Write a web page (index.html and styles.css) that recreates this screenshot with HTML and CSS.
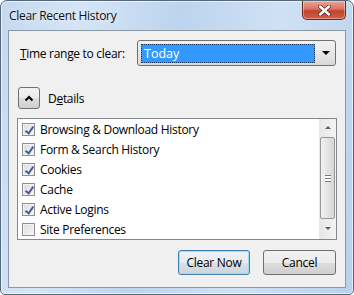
FILE: index.html
```html
<!DOCTYPE html>
<html lang="en">
<head>
  <meta charset="UTF-8" />
  <title>Clear Recent History</title>
  <link rel="stylesheet" href="styles.css">
</head>
<body>
  <div class="window">
    <div class="titlebar">
      <span class="title">Clear Recent History</span>
      <div class="close-btn">
        <svg width="15" height="11" viewBox="0 0 15 11">
          <path d="M3 1.5 L12 9.5 M12 1.5 L3 9.5" stroke="#5a2a2a" stroke-width="4" stroke-linecap="round"/>
          <path d="M3 1.5 L12 9.5 M12 1.5 L3 9.5" stroke="#fff" stroke-width="2.4" stroke-linecap="round"/>
        </svg>
      </div>
    </div>

    <div class="client">
      <div class="range-row">
        <label class="range-label"><u>T</u>ime range to clear:</label>
        <div class="dropdown">
          <div class="dropdown-value">Today</div>
          <div class="dropdown-arrow"></div>
        </div>
      </div>

      <div class="details-row">
        <div class="details-btn">
          <svg width="10" height="7" viewBox="0 0 10 7">
            <polyline points="1.5,5.5 5,2 8.5,5.5" fill="none" stroke="#000" stroke-width="2"/>
          </svg>
        </div>
        <span class="details-label">D<u>e</u>tails</span>
      </div>

      <div class="listbox">
        <div class="items">
          <div class="item"><span class="check on"></span>Browsing &amp; Download History</div>
          <div class="item"><span class="check on"></span>Form &amp; Search History</div>
          <div class="item"><span class="check on"></span>Cookies</div>
          <div class="item"><span class="check on"></span>Cache</div>
          <div class="item"><span class="check on"></span>Active Logins</div>
          <div class="item"><span class="check"></span>Site Preferences</div>
        </div>
        <div class="scrollbar">
          <div class="sb-arrow"><span class="tri-up"></span></div>
          <div class="sb-thumb"><span class="grip"></span></div>
          <div class="sb-arrow"><span class="tri-down"></span></div>
        </div>
      </div>

      <div class="buttons">
        <div class="button default">Clear Now</div>
        <div class="button">Cancel</div>
      </div>
    </div>
  </div>
</body>
</html>
```

FILE: styles.css
```css
body {
  margin: 0;
  padding: 0;
  font-family: "Open Sans", "Noto Sans", sans-serif;
  font-size: 12px;
  color: #000;
  background: #fff;
}

.window {
  width: 354px;
  height: 295px;
  box-sizing: border-box;
  border: 1px solid #56687e;
  border-radius: 7px 7px 5px 5px;
  background: linear-gradient(100deg, #c4d8ee 0%, #d5e5f6 20%, #bcd4ee 45%, #cfe1f4 70%, #b9d1ec 100%);
  box-shadow: inset 0 0 0 1px rgba(255, 255, 255, 0.6);
  padding: 0 7px 6px 7px;
  display: flex;
  flex-direction: column;
}

.titlebar {
  height: 29px;
  display: flex;
  align-items: flex-start;
  justify-content: space-between;
}

.title {
  margin-top: 6px;
  margin-left: 1px;
  font-size: 12px;
  letter-spacing: -0.3px;
  color: #111;
  text-shadow: 0 0 6px rgba(255, 255, 255, 0.9);
}

.close-btn {
  width: 44px;
  height: 19px;
  box-sizing: border-box;
  border: 1px solid #6b2a24;
  border-top: none;
  border-radius: 0 0 5px 5px;
  background: linear-gradient(#e9a797 0%, #d8735f 45%, #c0432a 55%, #d4604a 100%);
  box-shadow: inset 0 0 0 1px rgba(255, 255, 255, 0.35);
  display: flex;
  align-items: center;
  justify-content: center;
}

.client {
  flex: 1;
  border: 1px solid #8b97a5;
  background: #f0f0f0;
  padding: 9px 8px 0 8px;
  display: flex;
  flex-direction: column;
}

.range-row {
  display: flex;
  align-items: center;
  height: 26px;
}

.range-label {
  margin-left: 3px;
  width: 117px;
  letter-spacing: -0.3px;
}

.dropdown {
  width: 199px;
  height: 26px;
  box-sizing: border-box;
  border: 1px solid #707070;
  border-radius: 3px;
  background: linear-gradient(#f3f3f3, #e6e6e6 50%, #d9d9d9);
  display: flex;
  align-items: center;
  padding: 0 3px;
}

.dropdown-value {
  width: 174px;
  height: 19px;
  box-sizing: border-box;
  background: #3399ff;
  border: 1px dotted #1a3a66;
  color: #fff;
  font-size: 12.5px;
  line-height: 17px;
  padding-left: 2px;
}

.dropdown-arrow {
  margin-left: 7px;
  width: 0;
  height: 0;
  border-left: 4px solid transparent;
  border-right: 4px solid transparent;
  border-top: 4px solid #000;
}

.details-row {
  display: flex;
  align-items: center;
  margin-top: 21px;
  height: 22px;
}

.details-btn {
  margin-left: 1px;
  width: 22px;
  height: 22px;
  box-sizing: border-box;
  border: 1px solid #707070;
  border-radius: 3px;
  background: linear-gradient(#f2f2f2, #ebebeb 50%, #dddddd 51%, #cfcfcf);
  display: flex;
  align-items: center;
  justify-content: center;
}

.details-label {
  margin-left: 8px;
  letter-spacing: -0.3px;
}

.listbox {
  margin-top: 9px;
  height: 122px;
  box-sizing: border-box;
  border: 1px solid #828790;
  background: #fff;
  display: flex;
}

.items {
  flex: 1;
}

.item {
  height: 20px;
  display: flex;
  align-items: center;
  letter-spacing: -0.3px;
}

.check {
  width: 13px;
  height: 13px;
  box-sizing: border-box;
  margin-left: 4px;
  margin-right: 5px;
  border: 1px solid #8f8f8f;
  background: linear-gradient(135deg, #dcdcdc, #f6f6f6);
  box-shadow: inset 0 0 0 1px #f4f4f4;
  position: relative;
}

.check.on::after {
  content: "";
  position: absolute;
  left: 4px;
  top: 1px;
  width: 3px;
  height: 7px;
  border-right: 2px solid #4a5a9c;
  border-bottom: 2px solid #4a5a9c;
  transform: rotate(35deg);
}

.scrollbar {
  width: 17px;
  background: linear-gradient(90deg, #e6e6e6, #f4f4f4);
  display: flex;
  flex-direction: column;
}

.sb-arrow {
  height: 17px;
  display: flex;
  align-items: center;
  justify-content: center;
}

.tri-up, .tri-down {
  width: 0;
  height: 0;
  border-left: 3px solid transparent;
  border-right: 3px solid transparent;
}

.tri-up {
  border-bottom: 3px solid #606060;
}

.tri-down {
  border-top: 3px solid #606060;
}

.sb-thumb {
  margin: 1px 1px;
  height: 82px;
  box-sizing: border-box;
  border: 1px solid #979797;
  border-radius: 2px;
  background: linear-gradient(90deg, #f1f1f1, #e4e4e4 50%, #d6d6d6);
  display: flex;
  align-items: center;
  justify-content: center;
}

.grip {
  width: 6px;
  height: 7px;
  border-top: 1px solid #777;
  border-bottom: 1px solid #777;
  box-sizing: border-box;
  background: linear-gradient(#fff 0, #fff 2px, #777 2px, #777 3px, #fff 3px);
}

.buttons {
  display: flex;
  justify-content: flex-end;
  gap: 13px;
  margin-top: 10px;
  margin-right: 1px;
}

.button {
  width: 73px;
  height: 25px;
  box-sizing: border-box;
  border: 1px solid #707070;
  border-radius: 3px;
  background: linear-gradient(#f2f2f2, #ebebeb 50%, #dddddd 51%, #cfcfcf);
  display: flex;
  align-items: center;
  justify-content: center;
  letter-spacing: -0.3px;
}

.button.default {
  width: 72px;
  border-color: #3c7fb1;
  box-shadow: inset 0 0 0 1px #9fdcf7;
  background: linear-gradient(#eef2f5, #e6ebef 50%, #d9e0e6 51%, #cdd5dc);
}
```
